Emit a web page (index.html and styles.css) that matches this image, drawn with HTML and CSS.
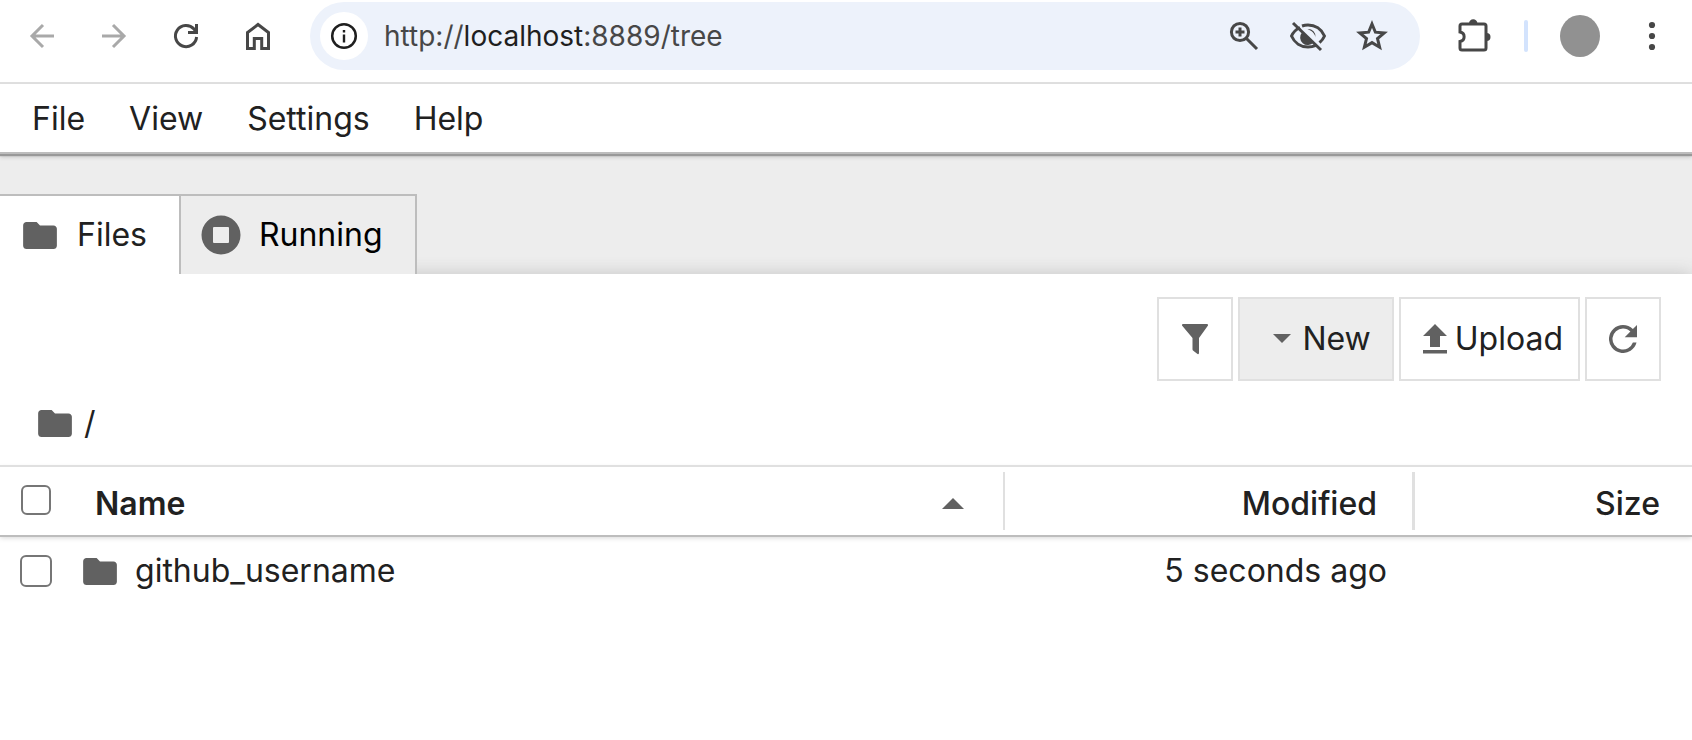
FILE: index.html
```html
<!DOCTYPE html>
<html lang="en">
<head>
<meta charset="utf-8">
<title>Home</title>
<link rel="stylesheet" href="styles.css">
</head>
<body>
<svg class="defs" aria-hidden="true">
  <symbol id="folder" viewBox="2 4 20 16"><path d="M10 4H4c-1.1 0-1.99.9-1.99 2L2 18c0 1.1.9 2 2 2h16c1.1 0 2-.9 2-2V8c0-1.1-.9-2-2-2h-8l-2-2z"/></symbol>
</svg>

<header class="browser">
  <nav class="browser-nav" aria-label="Browser">
    <button class="tool faded" aria-label="Back"><svg class="stroke" width="32" height="32" viewBox="0 0 32 32"><path d="M28 16H6M17 5 6 16l11 11"/></svg></button>
    <button class="tool faded" aria-label="Forward"><svg class="stroke" width="32" height="32" viewBox="0 0 32 32"><path d="M4 16h22M15 5l11 11-11 11"/></svg></button>
    <button class="tool" aria-label="Reload"><svg class="stroke" width="32" height="32" viewBox="0 0 32 32"><path d="M26.6 17a10.6 10.6 0 1 1-2.6-8l2.400 3"/><path d="M26.500 4v8.500H18"/></svg></button>
    <button class="tool" aria-label="Home"><svg class="stroke" width="32" height="32" viewBox="0 0 32 32"><path d="M5.500 28.500V12.500L16 4.500l10.500 8v16h-6.800V18.500h-7.400v10z"/></svg></button>
  </nav>
  <div class="omnibox">
    <button class="site-info" aria-label="Site information"><svg width="28" height="28" viewBox="0 0 28 28"><circle cx="14" cy="14" r="11.800" fill="none" stroke="currentColor" stroke-width="2.500"/><path fill="currentColor" d="M12.800 8h2.400v2.400h-2.400zM12.800 12.400h2.400v8h-2.400z"/></svg></button>
    <div class="url" role="textbox" aria-label="Address" contenteditable="true" spellcheck="false">http://<span class="host">localhost</span>:8889/tree</div>
    <div class="omni-tools">
      <button class="tool" aria-label="Zoom"><svg class="stroke" width="32" height="32" viewBox="0 0 32 32"><circle cx="12" cy="12" r="8.600"/><path d="m18 18 11 11M12 7.500v9M7.500 12h9"/></svg></button>
      <button class="tool" aria-label="Tracking blocked"><svg class="stroke" width="40" height="32" viewBox="0 0 40 32"><path d="M12 7.500C8 9.500 5 12.500 3.500 16c3 7 9.500 11 16.500 11 3 0 5.500-.6 8-1.700M14 6c2-.7 4-1 6-1 7 0 13.500 4 16.500 11-1.200 2.800-3 5-5 6.700"/><path d="m5 3 28 27"/><path fill="currentColor" stroke="none" d="M14 12.500 25.500 22.500A7.500 7.500 0 0 1 14 12.500zM19.500 9a7.500 7.500 0 0 1 8 8.500c-.5-4-4-7-8-8.500z"/></svg></button>
      <button class="tool" aria-label="Bookmark"><svg class="stroke" width="32" height="32" viewBox="0 0 32 32"><path d="m16 4 3.400 8.200 8.800.7-6.700 5.700 2.100 8.600L16 22.600l-7.600 4.600 2.100-8.600-6.700-5.700 8.800-.7z"/></svg></button>
    </div>
  </div>
  <div class="browser-end">
    <button class="tool" aria-label="Extensions"><svg width="36" height="36" viewBox="0 0 36 36"><path class="line" d="M6 6h22q2 0 2 2v22q0 2-2 2H6q-2 0-2-2v-6.500c5.500-1 5.500-8.500 0-9.500V8q0-2 2-2z"/><path fill="currentColor" d="M13 5.500a4.200 4.200 0 0 1 8.400 0zM30.500 15a4 4 0 0 1 0 8z"/></svg></button>
    <span class="divider"></span>
    <button class="avatar" aria-label="Profile"></button>
    <button class="tool" aria-label="More"><svg width="8" height="32" viewBox="0 0 8 32" fill="currentColor"><circle cx="4" cy="5" r="3.100"/><circle cx="4" cy="16" r="3.100"/><circle cx="4" cy="27" r="3.100"/></svg></button>
  </div>
</header>

<nav class="menu" aria-label="Main menu">
  <button>File</button>
  <button>View</button>
  <button>Settings</button>
  <button>Help</button>
</nav>

<div class="tabs" role="tablist">
  <button class="tab active" role="tab" aria-selected="true"><svg class="folder"><use href="#folder"/></svg>Files</button>
  <button class="tab" role="tab" aria-selected="false"><svg width="40" height="40" viewBox="0 0 40 40"><path fill="#616161" fill-rule="evenodd" d="M20 .5a19.500 19.500 0 1 1 0 39 19.500 19.500 0 0 1 0-39zM13 12q-1 0-1 1v14q0 1 1 1h14q1 0 1-1V13q0-1-1-1z"/></svg>Running</button>
</div>

<main class="panel">
  <div class="actions">
    <button class="square" aria-label="Filter"><svg width="28" height="32" viewBox="0 0 28 32"><path fill="#616161" d="M2 1h24q1.500 0 1 1.500L18 15v15q0 1.500-1.500 1L12 27.500q-.5-.5-.5-1.500V15L1 2.500Q.5 1 2 1z"/></svg></button>
    <button class="new"><svg width="18" height="10" viewBox="0 0 18 10"><path fill="#616161" d="M0 0h18L9 9z"/></svg>New</button>
    <button class="upload"><svg width="24" height="30" viewBox="0 0 24 30"><path fill="#616161" d="M7 23V12H0L12 0l12 12h-7v11zM0 26h24v3.500H0z"/></svg>Upload</button>
    <button class="square" aria-label="Refresh"><svg width="28" height="28" viewBox="4 4 16 16"><path fill="#616161" d="M17.650 6.350A7.958 7.958 0 0 0 12 4a8 8 0 1 0 7.730 10h-2.080A6 6 0 1 1 12 6c1.660 0 3.140.69 4.220 1.780L13 11h7V4z"/></svg></button>
  </div>
  <div class="crumbs"><svg class="folder"><use href="#folder"/></svg><a href="#root">/</a></div>

  <table class="files">
    <colgroup><col><col class="col-modified"><col class="col-size"></colgroup>
    <thead>
      <tr>
        <th scope="col"><div class="cell head name"><input type="checkbox" aria-label="Select all"><span class="label">Name</span><svg width="22" height="11" viewBox="0 0 22 11"><path fill="#616161" d="M0 11 11 0l11 11z"/></svg></div></th>
        <th scope="col"><div class="cell head modified">Modified</div></th>
        <th scope="col"><div class="cell head size">Size</div></th>
      </tr>
    </thead>
    <tbody>
      <tr>
        <td><div class="cell"><input type="checkbox" aria-label="Select github_username"><svg class="folder"><use href="#folder"/></svg><a href="#github_username">github_username</a></div></td>
        <td><div class="cell ago">5 seconds ago</div></td>
        <td></td>
      </tr>
    </tbody>
  </table>
</main>
</body>
</html>
```
FILE: styles.css
```css
* {
  box-sizing: border-box;
}

body {
  margin: 0;
  min-height: 100vh;
  display: flex;
  flex-direction: column;
  background: #ededed;
  color: #212121;
  font: 400 32px/40px Inter, "Liberation Sans", sans-serif;
}

button {
  margin: 0;
  padding: 0;
  border: 0;
  background: none;
  color: inherit;
  font: inherit;
}

a {
  color: inherit;
  text-decoration: none;
}

svg {
  display: block;
  flex: none;
}

.defs {
  position: absolute;
  width: 0;
  height: 0;
}

.folder {
  width: 34px;
  height: 27px;
  fill: #616161;
}

.stroke,
.line {
  fill: none;
  stroke: currentColor;
  stroke-width: 3;
}

/* Browser toolbar */
.browser {
  display: flex;
  align-items: center;
  padding: 2px 36px 12px 26px;
  border-bottom: 2px solid #dfdfdf;
  background: #fff;
  color: #474747;
}

.browser-nav {
  display: flex;
  gap: 40px;
  margin-right: 36px;
}

.faded {
  color: #a9a9a9;
}

.omnibox {
  flex: 1;
  display: flex;
  align-items: center;
  height: 68px;
  padding: 0 32px 0 10px;
  border-radius: 34px;
  background: #edf2fb;
}

.site-info {
  display: grid;
  place-items: center;
  width: 48px;
  height: 48px;
  border-radius: 50%;
  background: #fff;
  color: #1f1f1f;
}

.url {
  flex: 1;
  margin-left: 16px;
  font-size: 28px;
}

.host {
  color: #1f1f1f;
}

.omni-tools {
  display: flex;
  gap: 28px;
}

.browser-end {
  display: flex;
  align-items: center;
  margin-left: 36px;
}

.divider {
  width: 4px;
  height: 32px;
  margin: 0 32px;
  border-radius: 2px;
  background: #d3e3fd;
}

.avatar {
  width: 40px;
  height: 42px;
  margin-right: 48px;
  border-radius: 50%;
  background: #919191;
}

/* Menu bar */
.menu {
  position: relative;
  display: flex;
  gap: 44px;
  padding: 15px 32px 13px;
  border-bottom: 2px solid #bdbdbd;
  background: #fff;
  box-shadow: 0 2px 1px #999, 0 3px 4px #c4c4c4;
}

/* Tabs */
.tabs {
  position: relative;
  z-index: 1;
  display: flex;
  align-self: flex-start;
  margin-top: 40px;
}

.tab {
  display: flex;
  align-items: center;
  gap: 18px;
  height: 80px;
  padding: 0 32px 0 20px;
  border: solid #bdbdbd;
  border-width: 2px 2px 0 0;
  background: #ededed;
  color: #000;
}

.tab.active {
  gap: 20px;
  padding: 0 32px 0 23px;
  background: #fff;
  color: #212121;
}

/* File browser */
.panel {
  flex: 1;
  background: #fff;
  box-shadow: 0 0 16px #c4c4c4;
}

.actions {
  display: flex;
  justify-content: flex-end;
  gap: 5px;
  padding: 23px 31px 0;
}

.actions button {
  display: flex;
  align-items: center;
  justify-content: center;
  height: 84px;
  border: 2px solid #e0e0e0;
}

.actions .square {
  width: 76px;
}

.actions .new {
  gap: 11px;
  padding: 0 21px 0 33px;
  background: #ededed;
}

.actions .upload {
  gap: 8px;
  padding: 0 15px 0 22px;
}

.crumbs {
  display: flex;
  align-items: center;
  gap: 12px;
  padding: 22px 38px;
}

.files {
  width: 100%;
  border-collapse: collapse;
  table-layout: fixed;
}

.col-modified {
  width: 410px;
}

.col-size {
  width: 277px;
}

th,
td {
  padding: 0;
}

thead {
  border-top: 2px solid #e0e0e0;
  border-bottom: 2px solid #bdbdbd;
  box-shadow: 0 2px 5px #d8d8d8;
}

th {
  padding: 5px 0;
  font-weight: 600;
  text-align: left;
}

.cell {
  display: flex;
  align-items: center;
  height: 68px;
  padding-left: 20px;
}

.cell .folder {
  margin: 0 18px 0 31px;
}

.head {
  height: 58px;
  padding-top: 5px;
}

.name {
  padding-right: 39px;
  border-right: 2px solid #e0e0e0;
}

.name .label {
  flex: 1;
  padding-left: 43px;
}

.modified {
  justify-content: flex-end;
  padding-right: 35px;
  border-right: 3px solid #e0e0e0;
  font-weight: 500;
}

.size {
  justify-content: flex-end;
  padding-right: 32px;
  font-weight: 500;
}

.ago {
  justify-content: flex-end;
  padding-right: 28px;
}

input[type="checkbox"] {
  appearance: none;
  width: 32px;
  height: 32px;
  margin: 0;
  border: 2px solid #767676;
  border-radius: 6px;
  background: #fff;
}

.name input[type="checkbox"] {
  width: 30px;
  height: 30px;
  margin: 0 1px 7px;
}
```
